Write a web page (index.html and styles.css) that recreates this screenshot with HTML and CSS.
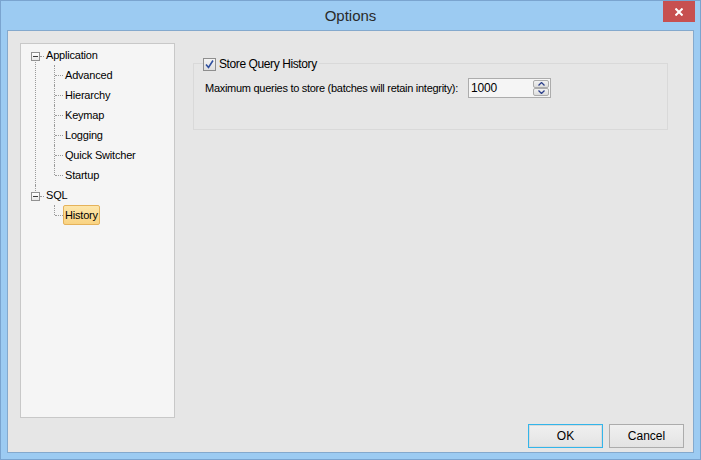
FILE: index.html
```html
<!DOCTYPE html>
<html lang="en">
<head>
    <meta charset="UTF-8">
    <title>Options</title>
    <link rel="stylesheet" href="styles.css">
</head>
<body>
<div class="window">
    <div class="titlebar">
        <span class="title">Options</span>
        <div class="close">
            <svg width="8" height="8" viewBox="0 0 8 8"><path d="M0.5 0.5 L7.5 7.5 M7.5 0.5 L0.5 7.5" stroke="#fff" stroke-width="2"/></svg>
        </div>
    </div>
    <div class="client">
        <div class="main">
            <div class="tree-panel">
                <ul class="tree">
                    <li>
                        <div class="row"><span class="expander"></span><span class="dash"></span><span class="label">Application</span></div>
                        <ul class="children">
                            <li><div class="row"><span class="dash child"></span><span class="label">Advanced</span></div></li>
                            <li><div class="row"><span class="dash child"></span><span class="label">Hierarchy</span></div></li>
                            <li><div class="row"><span class="dash child"></span><span class="label">Keymap</span></div></li>
                            <li><div class="row"><span class="dash child"></span><span class="label">Logging</span></div></li>
                            <li><div class="row"><span class="dash child"></span><span class="label">Quick Switcher</span></div></li>
                            <li><div class="row"><span class="dash child"></span><span class="label">Startup</span></div></li>
                        </ul>
                    </li>
                    <li>
                        <div class="row"><span class="expander"></span><span class="dash"></span><span class="label">SQL</span></div>
                        <ul class="children">
                            <li><div class="row"><span class="dash child"></span><span class="label selected">History</span></div></li>
                        </ul>
                    </li>
                </ul>
            </div>
            <div class="content">
                <div class="group">
                    <div class="legend">
                        <span class="checkbox">
                            <svg width="11" height="11" viewBox="0 0 11 11"><path d="M2 5.5 L4.5 8.5 L9 1.5" fill="none" stroke="#2f4f9e" stroke-width="1.6"/></svg>
                        </span>
                        <span>Store Query History</span>
                    </div>
                    <div class="field">
                        <span class="field-label">Maximum queries to store (batches will retain integrity):</span>
                        <div class="spin">
                            <span class="spin-value">1000</span>
                            <div class="spin-buttons">
                                <span class="spin-btn"><svg width="7" height="4" viewBox="0 0 7 4"><path d="M0.5 3.5 L3.5 0.5 L6.5 3.5" fill="none" stroke="#2b3f8a" stroke-width="1.3"/></svg></span>
                                <span class="spin-btn"><svg width="7" height="4" viewBox="0 0 7 4"><path d="M0.5 0.5 L3.5 3.5 L6.5 0.5" fill="none" stroke="#2b3f8a" stroke-width="1.3"/></svg></span>
                            </div>
                        </div>
                    </div>
                </div>
            </div>
        </div>
        <div class="footer">
            <button class="btn btn-default">OK</button>
            <button class="btn">Cancel</button>
        </div>
    </div>
</div>
</body>
</html>
```

FILE: styles.css
```css
html,
body {
    margin: 0;
    padding: 0;
    width: 701px;
    height: 460px;
    overflow: hidden;
}

body {
    font: 11px "Liberation Sans", Arial, sans-serif;
    letter-spacing: -0.2px;
    color: #000000;
}

.window {
    box-sizing: border-box;
    width: 701px;
    height: 460px;
    border: 1px solid #7aa4cf;
    background: #9ccbf2;
    display: flex;
    flex-direction: column;
}

.titlebar {
    position: relative;
    height: 29px;
    display: flex;
    align-items: center;
    justify-content: center;
}
.title {
    font-size: 15px;
    letter-spacing: 0;
    color: #2a2a2a;
}
.close {
    position: absolute;
    top: 0;
    right: 5px;
    width: 32px;
    height: 21px;
    background: #c75050;
    display: flex;
    align-items: center;
    justify-content: center;
}

.client {
    flex: 1;
    margin: 0 6px 6px 6px;
    border: 1px solid #84a9cd;
    background: #e6e6e6;
    display: flex;
    flex-direction: column;
    min-height: 0;
}
.main {
    flex: 1;
    display: flex;
    padding: 12px 0 0 12px;
    min-height: 0;
}

/* tree */
.tree-panel {
    width: 155px;
    box-sizing: border-box;
    border: 1px solid #c8c8c8;
    background: #f5f5f5;
}
.tree,
.tree ul {
    list-style: none;
    margin: 0;
    padding: 0;
}
.tree {
    padding: 1px 0 0 10px;
}
.tree .children {
    margin-left: 19px;
}
.tree li {
    position: relative;
}
.tree li::before {
    content: "";
    position: absolute;
    left: 4px;
    top: 0;
    bottom: 0;
    border-left: 1px dotted #9a9a9a;
}
.tree > li:first-child::before {
    top: 10px;
}
.tree li:last-child::before {
    bottom: auto;
    height: 10px;
}
.row {
    position: relative;
    z-index: 1;
    height: 20px;
    display: flex;
    align-items: center;
}
.expander {
    position: relative;
    width: 9px;
    height: 9px;
    box-sizing: border-box;
    margin-top: 3px;
    border: 1px solid #919191;
    background: linear-gradient(#ffffff, #e8e8e8);
}
.expander::after {
    content: "";
    position: absolute;
    left: 1px;
    top: 3px;
    width: 5px;
    height: 1px;
    background: #3c3c3c;
}
.dash {
    width: 4px;
    height: 0;
    margin-top: 3px;
    border-top: 1px dotted #9a9a9a;
}
.dash.child {
    width: 8px;
    margin: 1px 0 0 5px;
}
.label {
    height: 20px;
    box-sizing: border-box;
    padding: 0 1px;
    border: 1px solid transparent;
    line-height: 18px;
    white-space: nowrap;
}
.label.selected {
    background: linear-gradient(#fde6ab, #f9d382);
    border-color: #e5b25a;
    border-radius: 2px;
}

/* right side */
.content {
    flex: 1;
    padding: 20px 25px 0 18px;
}
.group {
    height: 67px;
    box-sizing: border-box;
    border: 1px solid #d9d9d9;
}
.legend {
    width: max-content;
    height: 14px;
    margin: -7px 0 0 9px;
    padding-right: 2px;
    display: flex;
    align-items: center;
    gap: 3px;
    background: #e6e6e6;
    font-size: 12px;
    letter-spacing: -0.4px;
}
.checkbox {
    width: 13px;
    height: 13px;
    box-sizing: border-box;
    border: 1px solid #8e8e8e;
    background: linear-gradient(#f4f4f4, #dedede);
    display: flex;
}
.field {
    height: 20px;
    margin: 7px 0 0 11px;
    display: flex;
    align-items: center;
}
.field-label {
    margin-right: 10px;
    letter-spacing: -0.28px;
}
.spin {
    width: 83px;
    height: 20px;
    box-sizing: border-box;
    border: 1px solid #acacac;
    background: #f5f5f5;
    padding: 0 1px 0 2px;
    display: flex;
    align-items: center;
    justify-content: space-between;
    font-size: 12px;
}
.spin-buttons {
    width: 16px;
    height: 16px;
    display: flex;
    flex-direction: column;
}
.spin-btn {
    flex: 1;
    box-sizing: border-box;
    border: 1px solid #acacac;
    border-radius: 2px;
    background: linear-gradient(#f2f2f2, #dcdcdc);
    display: flex;
    align-items: center;
    justify-content: center;
}

/* buttons */
.footer {
    display: flex;
    justify-content: flex-end;
    gap: 6px;
    padding: 6px 9px 4px 0;
}
.btn {
    width: 75px;
    height: 24px;
    box-sizing: border-box;
    padding: 0;
    border: 1px solid #acacac;
    background: linear-gradient(#f0f0f0, #e3e3e3);
    font: 12px "Liberation Sans", Arial, sans-serif;
    color: #000000;
}
.btn-default {
    border-color: #33b5ea;
    box-shadow: inset 0 0 0 1px #dadada;
}
```
